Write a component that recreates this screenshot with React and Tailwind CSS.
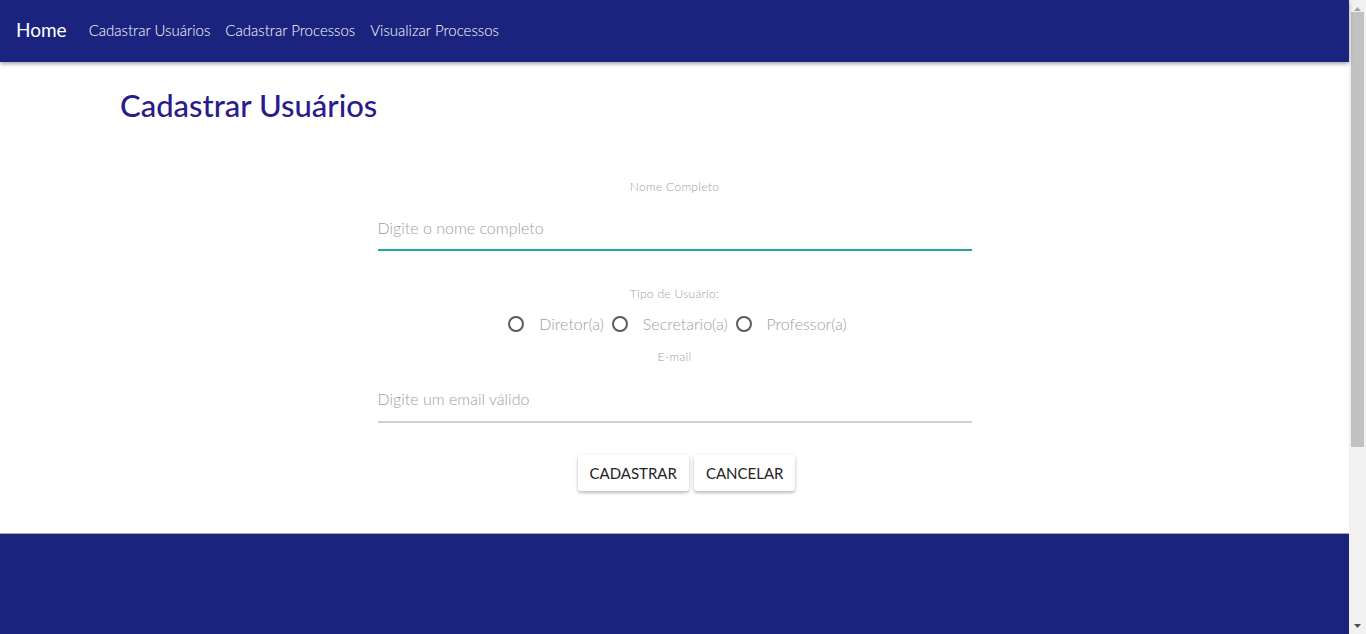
import React from "react";

function Radio({ label }) {
  return (
    <label className="flex items-center">
      <span className="w-4 h-4 rounded-full border-2 border-[#5a5a5a] mr-[15px]" />
      <span className="text-[16px] text-[#9e9e9e] font-light mr-[8px]">{label}</span>
    </label>
  );
}

export default function App() {
  const font = { fontFamily: "Lato, 'Open Sans', sans-serif" };
  return (
    <div style={font} className="h-[634px] overflow-hidden flex bg-white">
      <div className="flex-1 min-h-[874px] flex flex-col">
        <nav className="h-[62px] bg-[#1a237e] flex items-center px-[16px] shadow-[0_2px_4px_rgba(0,0,0,0.35)] relative z-10">
          <a className="text-white text-[19px] mr-[22px] leading-[24px] mt-[-2px]">Home</a>
          <div className="flex gap-[15px] text-white text-[15px] font-light mt-[-2px]">
            <a>Cadastrar Usuários</a>
            <a>Cadastrar Processos</a>
            <a>Visualizar Processos</a>
          </div>
        </nav>
        <main className="px-[120px] pt-[24px] pb-[42px]">
          <h1 className="text-[#2a1a8c] text-[31px] font-medium leading-[38px]">Cadastrar Usuários</h1>
          <form className="mx-auto w-[594px] mt-[56px] flex flex-col items-center">
            <label className="text-[12px] tracking-[0.3px] text-[#9e9e9e] font-light leading-[14px]">Nome Completo</label>
            <div className="w-full h-[49px] flex items-center border-b-2 border-[#26a69a] text-[16px] text-[#9e9e9e] font-light pt-[4px] mt-[8px]">
              Digite o nome completo
            </div>
            <label className="text-[12px] tracking-[0.3px] text-[#9e9e9e] font-light leading-[14px] mt-[36px]">Tipo de Usuário:</label>
            <div className="flex items-center mt-[12px] h-[22px] pl-[14px]">
              <Radio label="Diretor(a)" />
              <Radio label="Secretario(a)" />
              <Radio label="Professor(a)" />
            </div>
            <label className="text-[12px] tracking-[0.3px] text-[#9e9e9e] font-light leading-[14px] mt-[15px]">E-mail</label>
            <div className="w-full h-[51px] flex items-center border-b-2 border-[#d0d0d0] text-[16px] text-[#9e9e9e] font-light mt-[8px] pt-[4px]">
              Digite um email válido
            </div>
            <div className="flex gap-[5px] mt-[32px] pl-[24px]">
              <button type="button" className="h-[36px] px-[12px] bg-white rounded-[3px] text-[15px] text-[#222] shadow-[0_2px_3px_rgba(0,0,0,0.2),0_1px_5px_rgba(0,0,0,0.1)]">CADASTRAR</button>
              <button type="button" className="h-[36px] px-[12px] bg-white rounded-[3px] text-[15px] text-[#222] shadow-[0_2px_3px_rgba(0,0,0,0.2),0_1px_5px_rgba(0,0,0,0.1)]">CANCELAR</button>
            </div>
          </form>
        </main>
        <footer className="flex-1 bg-[#1a237e] border-t border-[#9fa3c8]"></footer>
      </div>
      <div className="w-[17px] h-[634px] bg-[#f1f1f1] flex flex-col items-center shrink-0">
        <div className="h-[17px] flex items-center justify-center">
          <svg width="7" height="4" viewBox="0 0 7 4"><path d="M3.5 0L7 4H0z" fill="#a3a3a3" /></svg>
        </div>
        <div className="w-[13px] h-[435px] bg-[#c1c1c1] mt-[-5px]" />
        <div className="flex-1" />
        <div className="h-[17px] flex items-center justify-center">
          <svg width="7" height="4" viewBox="0 0 7 4"><path d="M0 0H7L3.5 4z" fill="#505050" /></svg>
        </div>
      </div>
    </div>
  );
}
